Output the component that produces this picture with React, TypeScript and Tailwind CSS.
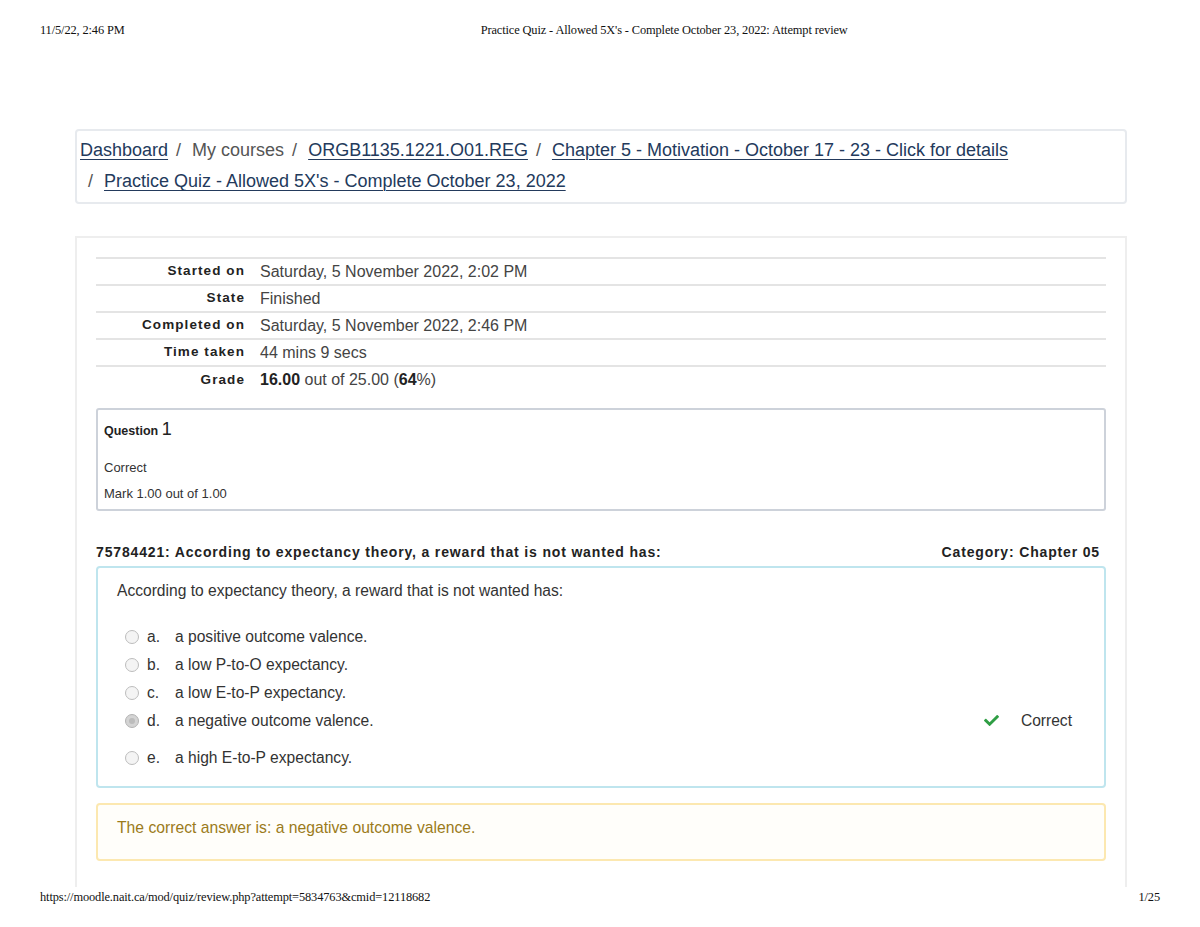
import React from "react";

const sans = { fontFamily: '"Liberation Sans", Arial, sans-serif' };
const serif = { fontFamily: '"Liberation Serif", "Times New Roman", serif' };

const crumbs = [
  { label: "Dashboard", link: true },
  { label: "My courses", link: false },
  { label: "ORGB1135.1221.O01.REG", link: true },
  { label: "Chapter 5 - Motivation - October 17 - 23 - Click for details", link: true },
  { label: "Practice Quiz - Allowed 5X's - Complete October 23, 2022", link: true },
];

const summary: { label: string; value: React.ReactNode }[] = [
  { label: "Started on", value: "Saturday, 5 November 2022, 2:02 PM" },
  { label: "State", value: "Finished" },
  { label: "Completed on", value: "Saturday, 5 November 2022, 2:46 PM" },
  { label: "Time taken", value: "44 mins 9 secs" },
  {
    label: "Grade",
    value: (
      <>
        <b className="font-bold text-[#222]">16.00</b> out of 25.00 (<b className="font-bold text-[#222]">64</b>%)
      </>
    ),
  },
];

const options = [
  { key: "a.", text: "a positive outcome valence." },
  { key: "b.", text: "a low P-to-O expectancy." },
  { key: "c.", text: "a low E-to-P expectancy." },
  { key: "d.", text: "a negative outcome valence.", picked: true },
  { key: "e.", text: "a high E-to-P expectancy." },
];

function Radio({ picked }: { picked?: boolean }) {
  return (
    <span
      className={`inline-flex h-[14px] w-[14px] shrink-0 items-center justify-center rounded-full border ${
        picked ? "border-[#b3b3b3] bg-[#d4d4d4]" : "border-[#bdbdbd] bg-[#f4f4f4]"
      }`}
    >
      {picked && <span className="h-[6px] w-[6px] rounded-full bg-[#bcbcbc]" />}
    </span>
  );
}

function CheckMark() {
  return (
    <svg viewBox="0 0 512 512" className="h-[15px] w-[15px] fill-[#2f9e44]">
      <path d="M173.898 439.404l-166.4-166.4c-9.997-9.997-9.997-26.206 0-36.204l36.203-36.204c9.997-9.998 26.207-9.998 36.204 0L192 312.69 432.095 72.596c9.997-9.997 26.207-9.997 36.204 0l36.203 36.204c9.997 9.997 9.997 26.206 0 36.204l-294.4 294.401c-9.998 9.997-26.207 9.997-36.204-.001z" />
    </svg>
  );
}

export default function App() {
  return (
    <div className="relative h-[927px] w-[1200px] overflow-hidden bg-white text-[#333]" style={sans}>
      <div className="flex items-center px-[40px] pt-[23px] text-[12.4px] leading-[14px] tracking-[-0.01em] text-[#111]" style={serif}>
        <span>11/5/22, 2:46 PM</span>
        <span className="ml-[356px]">Practice Quiz - Allowed 5X's - Complete October 23, 2022: Attempt review</span>
      </div>

      <nav className="ml-[75px] mt-[92px] h-[75px] w-[1052px] rounded-[4px] border-2 border-[#e7eaee] pb-[5px] pl-[3px] pt-[4px]">
        <ol className="flex flex-wrap text-[18px] leading-[31px]">
          {crumbs.map((c, i) => (
            <li key={c.label} className="flex">
              {i > 0 && <span className="ml-[8px] mr-[11px] text-[#555]">/</span>}
              {c.link ? (
                <a href="#" className="text-[#233a5c] underline decoration-[1px] underline-offset-[3px]">
                  {c.label}
                </a>
              ) : (
                <span className="text-[#555]">{c.label}</span>
              )}
            </li>
          ))}
        </ol>
      </nav>

      <main className="ml-[75px] mt-[32px] h-[651px] w-[1052px] border-2 border-b-0 border-[#eeeeee] px-[19px] pt-[19px]">
        <table className="w-full border-collapse">
          <tbody>
            {summary.map((row) => (
              <tr key={row.label} className="h-[27px] border-t-2 border-[#e4e4e4]">
                <th className="w-[149px] pr-0 text-right align-middle text-[13.5px] font-bold tracking-[0.08em] text-[#222]">
                  {row.label}
                </th>
                <td className="pl-[15px] align-middle text-[16px] text-[#444]">{row.value}</td>
              </tr>
            ))}
          </tbody>
        </table>

        <div className="mt-[15px] h-[103px] rounded-[3px] border-2 border-[#cdd2da] px-[6px] pt-[9px] text-[13px] text-[#333]">
          <div className="leading-[20px] text-[#222]">
            <span className="text-[12.5px] font-bold">Question </span>
            <span className="text-[18px]">1</span>
          </div>
          <div className="mt-[18px] leading-[18px]">Correct</div>
          <div className="mt-[8px] leading-[18px]">Mark 1.00 out of 1.00</div>
        </div>

        <div className="mt-[31px] flex justify-between pr-[6px] text-[14px] font-bold leading-[20px] tracking-[0.06em] text-[#222]">
          <span>75784421: According to expectancy theory, a reward that is not wanted has:</span>
          <span>Category: Chapter 05</span>
        </div>

        <div className="mt-[4px] h-[222px] rounded-[4px] border-2 border-[#bfe5ee] pl-[19px] pt-[12px] text-[15.6px] text-[#333]">
          <p className="leading-[22px]">According to expectancy theory, a reward that is not wanted has:</p>
          <div className="mt-[21px]">
            {options.map((o) => (
              <div key={o.key} className={`flex h-[28px] items-center pl-[8px] ${o.picked ? "mb-[9px]" : ""}`}>
                <Radio picked={o.picked} />
                <span className="ml-[8px] w-[28px]">{o.key}</span>
                <span>{o.text}</span>
                {o.picked && (
                  <span className="ml-auto mr-[32px] flex items-center">
                    <CheckMark />
                    <span className="ml-[22px]">Correct</span>
                  </span>
                )}
              </div>
            ))}
          </div>
        </div>

        <div className="mt-[15px] h-[58px] rounded-[4px] border-2 border-[#fce8b0] bg-[#fffefa] pl-[19px] pt-[12px] text-[15.7px] leading-[22px] text-[#9b7b1b]">
          The correct answer is: a negative outcome valence.
        </div>
      </main>

      <div className="mt-[3px] flex justify-between px-[40px] text-[12.4px] leading-[14px] tracking-[-0.01em] text-[#111]" style={serif}>
        <span>https://moodle.nait.ca/mod/quiz/review.php?attempt=5834763&amp;cmid=12118682</span>
        <span>1/25</span>
      </div>
    </div>
  );
}
